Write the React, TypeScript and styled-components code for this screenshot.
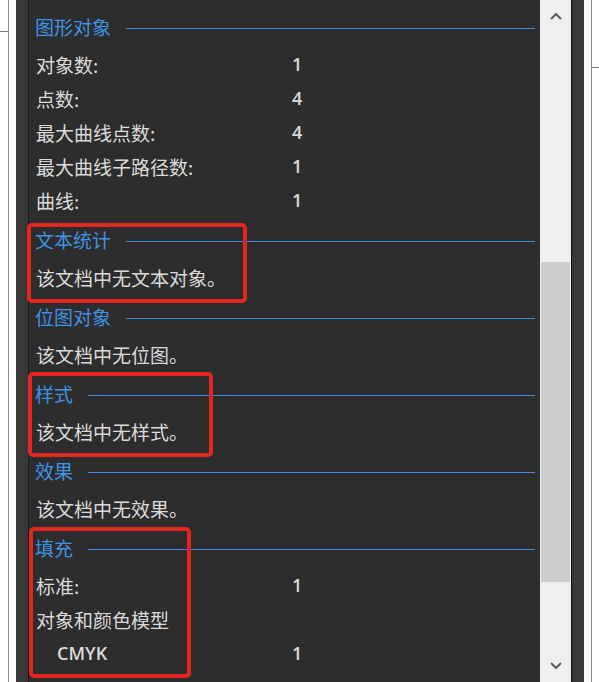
import React from 'react';
import styled, { createGlobalStyle } from 'styled-components';

const GlobalStyle = createGlobalStyle`
  html, body {
    margin: 0;
    padding: 0;
    background: #ffffff;
    overflow: hidden;
  }
`;

type Row = { label: string; value?: string; indent?: boolean };
type Mark = { top: number; left: number; width: number; height: number };
type Section = { title: string; rows: Row[]; mark?: Mark };

const sections: Section[] = [
  {
    title: '图形对象',
    rows: [
      { label: '对象数:', value: '1' },
      { label: '点数:', value: '4' },
      { label: '最大曲线点数:', value: '4' },
      { label: '最大曲线子路径数:', value: '1' },
      { label: '曲线:', value: '1' },
    ],
  },
  {
    title: '文本统计',
    rows: [{ label: '该文档中无文本对象。' }],
    mark: { top: 5, left: -2, width: 220, height: 80 },
  },
  {
    title: '位图对象',
    rows: [{ label: '该文档中无位图。' }],
  },
  {
    title: '样式',
    rows: [{ label: '该文档中无样式。' }],
    mark: { top: 0, left: -1, width: 185, height: 85 },
  },
  {
    title: '效果',
    rows: [{ label: '该文档中无效果。' }],
  },
  {
    title: '填充',
    rows: [
      { label: '标准:', value: '1' },
      { label: '对象和颜色模型' },
      { label: 'CMYK', value: '1', indent: true },
    ],
    mark: { top: 1, left: 0, width: 162, height: 151 },
  },
];

function Chevron({ up }: { up?: boolean }) {
  return (
    <svg width="12" height="8" viewBox="0 0 12 8">
      <polyline
        points={up ? '1,7 6,2 11,7' : '1,1 6,6 11,1'}
        fill="none"
        stroke="#5f5f5f"
        strokeWidth="2.2"
      />
    </svg>
  );
}

function App() {
  return (
    <Screen>
      <GlobalStyle />
      <WindowEdge>
        <EdgeTick $top={31} />
      </WindowEdge>
      <Gap />
      <SideStrip />
      <Panel>
        {sections.map((s) => (
          <Block key={s.title}>
            <Header>
              <HeaderText>{s.title}</HeaderText>
              <HeaderLine />
            </Header>
            {s.rows.map((r) => (
              <Line key={r.label}>
                <Label $indent={r.indent}>{r.label}</Label>
                {r.value && <Value>{r.value}</Value>}
              </Line>
            ))}
            {s.mark && (
              <RedMark
                style={{
                  top: s.mark.top,
                  left: s.mark.left,
                  width: s.mark.width,
                  height: s.mark.height,
                }}
              />
            )}
          </Block>
        ))}
      </Panel>
      <Scrollbar>
        <ArrowBtn>
          <Chevron up />
        </ArrowBtn>
        <Track>
          <Thumb />
        </Track>
        <ArrowBtn>
          <Chevron />
        </ArrowBtn>
      </Scrollbar>
      <SideStrip $dark />
      <PaleGap />
      <WindowEdge $right>
        <EdgeTick $top={67} />
      </WindowEdge>
    </Screen>
  );
}

const Screen = styled.div`
  display: flex;
  flex-direction: row;
  width: 599px;
  height: 682px;
  background: #ffffff;
  font-family: "Noto Sans CJK SC", "Noto Sans", sans-serif;
`;

const WindowEdge = styled.div<{ $right?: boolean }>`
  position: relative;
  width: ${(p) => (p.$right ? '8px' : '9px')};
  flex-shrink: 0;
  box-sizing: border-box;
  ${(p) => (p.$right ? 'border-left: 1px solid #8c8c8c;' : 'border-right: 1px solid #8c8c8c;')}
`;

const EdgeTick = styled.div<{ $top: number }>`
  position: absolute;
  top: ${(p) => p.$top}px;
  left: 0;
  right: 0;
  height: 1px;
  background: #777777;
`;

const Gap = styled.div`
  width: 7px;
  flex-shrink: 0;
`;

const PaleGap = styled.div`
  width: 7px;
  flex-shrink: 0;
  background: #fcf8f8;
`;

const SideStrip = styled.div<{ $dark?: boolean }>`
  width: 13px;
  flex-shrink: 0;
  box-sizing: border-box;
  background: #383838;
  ${(p) => (p.$dark ? 'border-left: 1px solid #0d0d0d;' : 'border-right: 1px solid #1c1c1c;')}
`;

const Panel = styled.div`
  flex: 1;
  background: #2d2d2d;
  padding-top: 5px;
  box-sizing: border-box;
`;

const Block = styled.div`
  position: relative;
  padding-top: 3px;
`;

const Header = styled.div`
  display: flex;
  align-items: center;
  box-sizing: border-box;
  height: 40px;
  padding: 0 5px 4px 6px;
`;

const HeaderText = styled.span`
  color: #3f93e3;
  font-size: 19px;
  line-height: 1;
`;

const HeaderLine = styled.div`
  flex: 1;
  align-self: flex-start;
  height: 1px;
  margin-left: 15px;
  margin-top: 20px;
  background: #3a8eea;
`;

const Line = styled.div`
  display: flex;
  align-items: center;
  box-sizing: border-box;
  height: 34px;
  padding: 0 0 2px 7px;
  color: #dadada;
  font-size: 19px;
`;

const Label = styled.span<{ $indent?: boolean }>`
  width: ${(p) => (p.$indent ? '235px' : '256px')};
  padding-left: ${(p) => (p.$indent ? '21px' : '0')};
  font-family: ${(p) => (p.$indent ? '"Open Sans", "Noto Sans", sans-serif' : 'inherit')};
  font-weight: ${(p) => (p.$indent ? 600 : 400)};
  font-size: ${(p) => (p.$indent ? '18px' : '19px')};
`;

const Value = styled.span`
  font-family: "Open Sans", "Noto Sans", sans-serif;
  font-weight: 600;
  font-size: 18px;
`;

const RedMark = styled.div`
  position: absolute;
  box-sizing: border-box;
  border: 4px solid #e5261f;
  border-radius: 5px;
  pointer-events: none;
`;

const Scrollbar = styled.div`
  width: 31px;
  flex-shrink: 0;
  display: flex;
  flex-direction: column;
  background: #f0f0f0;
`;

const ArrowBtn = styled.div`
  height: 32px;
  display: flex;
  align-items: center;
  justify-content: center;
`;

const Track = styled.div`
  flex: 1;
  display: flex;
  flex-direction: column;
  padding: 0 1px;
`;

const Thumb = styled.div`
  margin-top: 230px;
  height: 320px;
  background: #cdcdcd;
`;

export default App;
